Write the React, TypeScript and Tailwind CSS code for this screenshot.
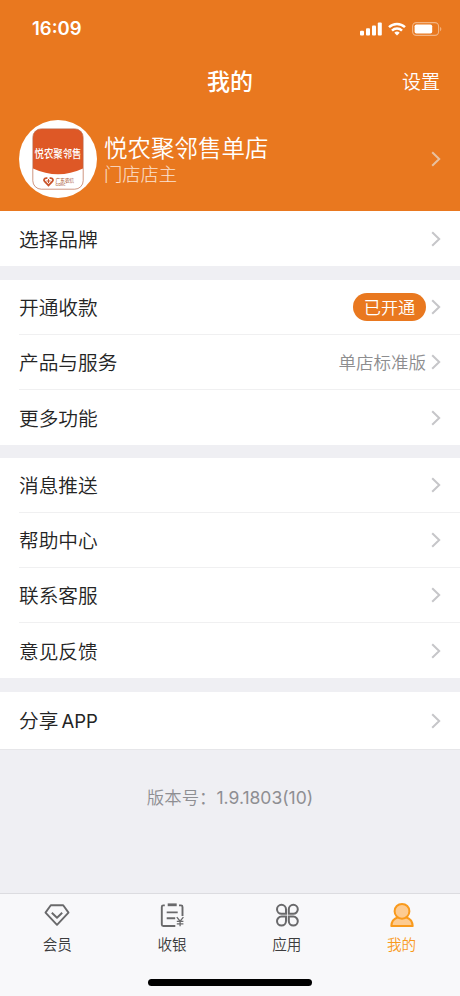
import React from 'react';
import clsx from 'clsx';

type RowItem = {
  label: string;
  latin?: string;
  badge?: string;
  value?: string;
};

const paymentRows: RowItem[] = [
  { label: '开通收款', badge: '已开通' },
  { label: '产品与服务', value: '单店标准版' },
  { label: '更多功能' },
];

const supportRows: RowItem[] = [
  { label: '消息推送' },
  { label: '帮助中心' },
  { label: '联系客服' },
  { label: '意见反馈' },
];

const Chevron = ({ className }: { className?: string }) => (
  <svg className={clsx('w-[10px] h-4 shrink-0', className)} viewBox="0 0 10 16" fill="none" stroke="currentColor" strokeWidth="2">
    <path d="M1.2 1.2 8.2 8l-7 6.8" />
  </svg>
);

const StatusBar = () => (
  <div className="flex h-[57px] items-center justify-between pl-8 pr-[18px]">
    <span className="font-['Inter',sans-serif] text-[18.5px] font-semibold leading-none">16:09</span>
    <div className="flex items-center gap-[6px]">
      <svg width="22" height="14" viewBox="0 0 22 14" fill="currentColor">
        <rect x="0" y="8.8" width="4" height="4.7" rx="1" />
        <rect x="6" y="6.2" width="4" height="7.3" rx="1" />
        <rect x="12" y="3.4" width="4" height="10.1" rx="1" />
        <rect x="17.8" y="0.4" width="4" height="13.1" rx="1" />
      </svg>
      <svg width="18" height="14" viewBox="0 0 18 14" fill="none" stroke="currentColor" strokeWidth="2.5">
        <path d="M1 5.2a11.6 11.6 0 0 1 16 0" />
        <path d="M4 8.6a7.2 7.2 0 0 1 10 0" />
        <path d="M6.3 10.8a4 4 0 0 1 5.4 0L9 13.6Z" fill="currentColor" stroke="none" />
      </svg>
      <svg width="30" height="14" viewBox="0 0 30 14" fill="none">
        <rect x="0.6" y="0.6" width="26" height="12.8" rx="3.8" stroke="#fff" strokeOpacity="0.45" strokeWidth="1.1" />
        <rect x="2.6" y="2.5" width="17.6" height="9" rx="1.8" fill="#fff" />
        <path d="M28.2 5v4.2c1.5-.6 1.5-3.6 0-4.2Z" fill="#fff" fillOpacity="0.5" />
      </svg>
    </div>
  </div>
);

const StoreLogo = () => (
  <div className="flex size-[78px] shrink-0 items-center justify-center rounded-full bg-white">
    <svg width="52" height="62" viewBox="0 0 52 62" className="overflow-visible">
      <path d="M1 40.5V9a8 8 0 0 1 8-8h34a8 8 0 0 1 8 8v31.5q-25 11.5-50 0Z" fill="#de5826" />
      <rect x="0.8" y="0.8" width="50.4" height="60.4" rx="8.5" fill="none" stroke="#b9694a" strokeWidth="0.7" />
      <text x="26" y="26" textAnchor="middle" fontSize="9.4" fontWeight="500" fill="#fff" transform="scale(1 1.16)">
        悦农聚邻售
      </text>
      {/* heart split at the top, with a small cross in the middle */}
      <path
        d="M15.4 50.2h-1.2c-2.2 0-2.8 2-1.6 3.2l3.9 4 3.9-4c1.2-1.2.6-3.2-1.600-3.200h-1.200"
        fill="none"
        stroke="#c9532a"
        strokeWidth="1.8"
      />
      <path d="M16.5 51v4M14.500 53h4" stroke="#c9532a" strokeWidth="1" />
      <text x="23.5" y="53.8" fontSize="4.7" fontWeight="500" fill="#b06a48">广东农信</text>
      <text x="23.5" y="58" fontSize="3.8" fontWeight="500" fill="#b06a48">GDRC</text>
    </svg>
  </div>
);

const Row = ({ item, divider, className }: { item: RowItem; divider?: boolean; className?: string }) => (
  <div className={clsx('pl-[19px]', className ?? 'h-[55px]')}>
    <div className={clsx('flex h-full items-center pr-[19px]', divider && 'border-b border-[#f0f0f1]')}>
      <span className="flex-1 text-[19.7px] text-[#242424]">
        {item.label}
        {item.latin && <span className="ml-[3px] font-['Inter',sans-serif] text-[18.5px] font-normal">{item.latin}</span>}
      </span>
      {item.badge && (
        <span className="mr-[5px] flex h-7 w-[73px] items-center justify-center rounded-full bg-[#e9781f] text-[17.2px] text-white">
          {item.badge}
        </span>
      )}
      {item.value && <span className="mr-[5px] text-[17.5px] text-[#8d8d8f]">{item.value}</span>}
      <Chevron className="text-[#c6c6c9]" />
    </div>
  </div>
);

const Section = ({ rows, className }: { rows: RowItem[]; className?: string }) => (
  <section className={clsx('bg-white', className)}>
    {rows.map((item, index) => (
      <Row key={item.label} item={item} divider={index < rows.length - 1} />
    ))}
  </section>
);

const MemberIcon = () => (
  <svg width="26" height="26" viewBox="0 0 26 26" fill="none" stroke="currentColor" strokeWidth="1.9" strokeLinejoin="round">
    <path d="M6.8 3.2h12.4l5.3 7.4L13 22.8 1.5 10.6Z" />
    <path d="m7.8 10.8 5.2 5 5.2-5" />
  </svg>
);

const CashierIcon = () => (
  <svg width="26" height="26" viewBox="0 0 26 26" fill="none" stroke="currentColor" strokeWidth="1.9">
    <path d="M5.8 3.4H4.3a1.500 1.500 0 0 0-1.500 1.500v17.600a1.500 1.500 0 0 0 1.500 1.500h12M20 3.400h2A1.500 1.500 0 0 1 23.500 4.900v9" />
    <path d="M8.7 2.8h9" strokeWidth="2.8" />
    <path d="M7.7 10.4h11M7.7 16.200h8.500" />
    <path d="m17.800 15.200 3.300 4 3.300-4M21.100 19.200v5M17.800 19.400h6.600M17.800 21.900h6.600" strokeWidth="1.3" />
  </svg>
);

const AppsIcon = () => (
  <svg width="26" height="26" viewBox="0 0 26 26" fill="none" stroke="currentColor" strokeWidth="2">
    <path d="M12 11.800H7.500a4.500 4.500 0 1 1 4.500-4.500Z" />
    <path d="M14.800 11.800h4.500a4.500 4.500 0 1 0-4.500-4.500Z" />
    <path d="M12 14.600H7.500a4.500 4.500 0 1 0 4.500 4.500Z" />
    <path d="M14.800 14.600h4.500a4.500 4.500 0 1 1-4.500 4.500Z" />
  </svg>
);

const MineIcon = () => (
  <svg width="26" height="26" viewBox="0 0 26 26" fill="#fdcb91" stroke="currentColor" strokeWidth="2" strokeLinejoin="round">
    <path d="M2.3 24.1c.2-4.600 2.700-7.700 6.700-8.900h8c4 1.200 6.500 4.300 6.700 8.900Z" />
    <circle cx="13" cy="9.3" r="7.4" />
  </svg>
);

const tabs = [
  { label: '会员', icon: <MemberIcon /> },
  { label: '收银', icon: <CashierIcon /> },
  { label: '应用', icon: <AppsIcon /> },
  { label: '我的', icon: <MineIcon />, active: true },
];

const TabBar = () => (
  <nav className="flex h-[103px] flex-col border-t border-[#dcdce0] bg-[#f8f8fa]">
    <div className="flex pr-px pt-[8px]">
      {tabs.map((tab) => (
        <div key={tab.label} className={clsx('flex flex-1 flex-col items-center', tab.active ? 'text-[#f99a1c]' : 'text-[#69696b]')}>
          {tab.icon}
          <span className={clsx('mt-[6px] text-[14.6px] leading-5', !tab.active && 'text-[#3c3c3d]')}>{tab.label}</span>
        </div>
      ))}
    </div>
    <div className="mx-auto mb-[10px] mt-auto h-[7px] w-[164px] rounded-full bg-black" />
  </nav>
);

export default function App() {
  return (
    <div className="flex h-[996px] w-[460px] flex-col overflow-hidden bg-[#efeff3] font-['Noto_Sans_CJK_SC',sans-serif] font-[350]">
      <header className="h-[211px] bg-[#e9781f] text-white">
        <StatusBar />
        <div className="grid h-[47px] grid-cols-3 items-center px-5">
          <h1 className="col-start-2 text-center text-[23px] font-medium leading-none">我的</h1>
          <span className="text-right text-[19px] leading-none">设置</span>
        </div>
        <div className="mt-4 flex items-center pl-[19px] pr-[19px]">
          <StoreLogo />
          <div className="ml-[7px] flex-1">
            <p className="text-[23.5px] leading-7">悦农聚邻售单店</p>
            <p className="text-[18.3px] font-light leading-6 text-white/80">门店店主</p>
          </div>
          <Chevron className="text-[#e8c1a0]" />
        </div>
      </header>

      <Section rows={[{ label: '选择品牌' }]} />
      <Section rows={paymentRows} className="mt-[14px]" />
      <Section rows={supportRows} className="mt-[13px]" />
      <section className="mt-[14px] border-b border-[#e6e6e9] bg-white">
        <Row item={{ label: '分享', latin: 'APP' }} className="h-[57px]" />
      </section>

      <main className="flex-1 pt-[34px] text-center text-[17.4px] text-[#8e8e92]">
        版本号：<span className="font-['Inter',sans-serif] text-[17.5px] font-normal">1.9.1803(10)</span>
      </main>
      <TabBar />
    </div>
  );
}
